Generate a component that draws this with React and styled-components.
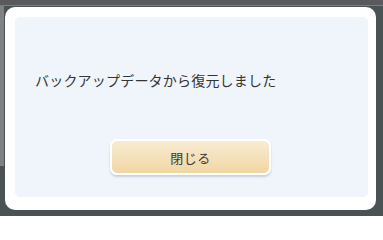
import styled, { createGlobalStyle } from 'styled-components'

const GlobalStyle = createGlobalStyle`
  html, body {
    margin: 0;
    padding: 0;
    width: 383px;
    height: 216px;
    overflow: hidden;
  }
  body {
    font-family: "Noto Sans CJK JP", "Noto Sans", sans-serif;
  }
`

// dimmed game screen behind the dialog
const Backdrop = styled.div`
  width: 383px;
  height: 216px;
  box-sizing: border-box;
  padding: 7px 7px 6px 5px;
  background:
    linear-gradient(#5a5a5c 0 5px, #7d7d80 5px 6px, transparent 6px),
    linear-gradient(90deg, #7f8184 0 4px, transparent 4px),
    #4a5256;
  background-repeat: no-repeat;
  background-size: 100% 100%, 100% 160px, 100% 100%;
  background-position: 0 0, 0 6px, 0 0;
`

const Dialog = styled.div`
  height: 100%;
  box-sizing: border-box;
  background: #ffffff;
  border-radius: 10px;
  padding: 10px 8px 13px 10px;
  display: flex;
`

const Panel = styled.div`
  flex: 1;
  display: flex;
  flex-direction: column;
  align-items: center;
  background: #eff5fb;
  border-radius: 5px;
  padding-top: 53px;
`

const Message = styled.p`
  align-self: stretch;
  margin: 0;
  padding-left: 20px;
  font-size: 14px;
  line-height: 20px;
  letter-spacing: 0.2px;
  color: #333436;
`

const CloseButton = styled.button`
  margin-top: 49px;
  margin-right: 2px;
  width: 161px;
  height: 36px;
  box-sizing: border-box;
  border: 2px solid #ffffff;
  border-radius: 7px;
  background: linear-gradient(#f8ecd3, #f1d6a3);
  box-shadow: 0 2px 2px rgba(150, 165, 185, 0.45);
  font-family: "Noto Sans CJK JP", "Noto Sans", sans-serif;
  font-size: 13px;
  color: #3a3a3a;
  letter-spacing: 0.5px;
  padding: 0;
  cursor: pointer;
`

export default function App() {
  return (
    <>
      <GlobalStyle />
      <Backdrop>
        <Dialog>
          <Panel>
            <Message>バックアップデータから復元しました</Message>
            <CloseButton>閉じる</CloseButton>
          </Panel>
        </Dialog>
      </Backdrop>
    </>
  )
}
